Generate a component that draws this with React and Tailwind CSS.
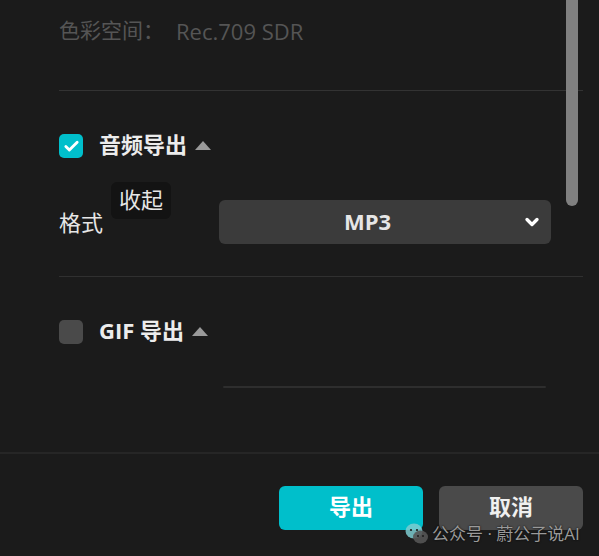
import React from "react";
import { Check, ChevronDown } from "lucide-react";

const FONT = { fontFamily: '"Open Sans", "Noto Sans CJK SC", sans-serif' };

function Caret() {
  return (
    <svg width="16" height="9" viewBox="0 0 16 9" className="ml-[8px] -mt-[1px]">
      <path d="M8 0 L16 9 L0 9 Z" fill="#9a9a9a" />
    </svg>
  );
}

function Section({ checked, title }) {
  return (
    <div className="flex h-6 items-center">
      <div
        className={
          "flex h-6 w-6 items-center justify-center rounded-[5px] " +
          (checked ? "bg-[#00bfcb]" : "bg-[#4a4a4a]")
        }
      >
        {checked && <Check size={17} strokeWidth={4} className="text-white" />}
      </div>
      <span className="relative -top-[2px] ml-4 text-[22px] font-bold leading-6 text-[#ececec]">{title}</span>
      <Caret />
    </div>
  );
}

export default function App() {
  return (
    <div className="relative h-[556px] w-[599px] overflow-hidden bg-[#1b1b1b]" style={FONT}>
      <div className="absolute right-[21px] top-[-10px] h-[216px] w-[12px] rounded-full bg-[#808080]" />

      <div className="pl-[59px] pr-[16px]">
        <div className="mt-[17px] flex h-7 items-center text-[21px] text-[#555555]">
          <span>色彩空间：</span>
          <span className="ml-[12px] text-[22px]">Rec.709 SDR</span>
        </div>
        <div className="mt-[45px] h-[1px] bg-[#333333]" />

        <div className="mt-[43px]">
          <Section checked title="音频导出" />
        </div>

        <div className="relative mt-[42px] flex h-11 items-center">
          <span className="text-[22px] text-[#e6e6e6]">格式</span>
          <div className="absolute left-[52px] top-[-18px] flex h-[37px] w-[60px] items-center justify-center rounded-[6px] bg-[#131313] pb-[2px] text-[22px] text-[#e6e6e6]">
            收起
          </div>
          <div className="ml-[116px] flex h-11 w-[332px] items-center rounded-[6px] bg-[#3b3b3b]">
            <span className="flex-1 pb-[2px] pr-[6px] text-center text-[22px] font-bold text-[#e6e6e6]">MP3</span>
            <ChevronDown size={20} strokeWidth={4} className="mr-[9px] text-white" />
          </div>
        </div>

        <div className="mt-[32px] h-[1px] bg-[#303030]" />

        <div className="mt-[43px]">
          <Section title="GIF 导出" />
        </div>

        <div className="ml-[164px] mt-[42px] h-[2px] w-[323px] rounded-full bg-[#2e2e2e]" />
      </div>

      <div className="mt-[64px] h-[2px] bg-[#262626]" />

      <div className="flex justify-end gap-4 pr-[16px] pt-[32px]">
        <button className="flex h-11 w-[144px] items-center justify-center rounded-[6px] bg-[#00bfcb] pb-[3px] text-[22px] font-bold text-white">
          导出
        </button>
        <button className="flex h-11 w-[144px] items-center justify-center rounded-[6px] bg-[#4a4a4a] pb-[3px] text-[22px] font-bold text-[#f0f0f0]">
          取消
        </button>
      </div>

      <div className="absolute left-[405px] top-[521px] flex items-center">
        <svg width="24" height="22" viewBox="0 0 24 22">
          <ellipse cx="9" cy="8" rx="8.5" ry="7.5" fill="#7ccbd0" opacity="0.85" />
          <ellipse cx="15.5" cy="14" rx="7.5" ry="6.5" fill="#555" opacity="0.9" />
          <circle cx="6" cy="7" r="1.1" fill="#1b1b1b" />
          <circle cx="12" cy="7" r="1.1" fill="#1b1b1b" />
          <circle cx="13" cy="13" r="1" fill="#1b1b1b" />
          <circle cx="18" cy="13" r="1" fill="#1b1b1b" />
        </svg>
        <span
          className="ml-[3px] text-[17px] text-[#9a9a9a]"
          style={{ textShadow: "0 0 2px #000" }}
        >
          公众号 · 蔚公子说AI
        </span>
      </div>
    </div>
  );
}
